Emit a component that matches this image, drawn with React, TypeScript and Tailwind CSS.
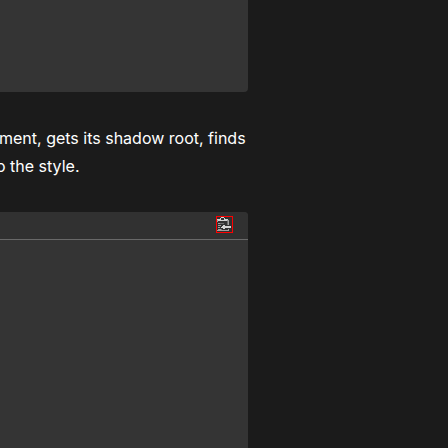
import React from "react";

function CopyIcon() {
  return (
    <svg viewBox="0 0 15 15" className="size-[15px]" shapeRendering="crispEdges" aria-hidden="true">
      <g fill="#d2d2d2">
        <path d="M4 0h3v1h-3zM3 1h1v1h-1zM7 1h1v1h-1zM0 2h4v1h-4zM7 2h4v1h-4zM1 3h9v1h-9z" />
        <path d="M4 10h1v1h-1zM5 9h9v2h-9zM6 8h2v4h-2z" />
      </g>
      <g fill="#a0a0a0">
        <path d="M0 3h1v2h-1zM10 3h2v1h-2zM11 3h1v5h-1zM0 14h11v-1h-11zM11 12h1v2h-1z" />
        <path d="M1 6h2v1h-2zM1 8h3v1h-3zM1 10h2v1h-2zM1 12h3v1h-3z" />
      </g>
      <path fill="#6b6b6b" d="M3 6h4v1h-4zM4 12h1v1h-1zM10 4h1v4h-1z" />
    </svg>
  );
}

export default function App() {
  return (
    <div className="min-h-screen overflow-hidden bg-[#1b1b1b] font-['Inter','Liberation_Sans',sans-serif] text-base leading-7 text-white">
      <main className="mr-[200px] flex h-screen flex-col">
        <div className="h-[92px] shrink-0 rounded-br bg-[#343434]" />
        <p className="my-8 whitespace-nowrap">
          <span className="-ml-px block">ment, gets its shadow root, finds</span>
          <span className="-ml-1 block">o the style.</span>
        </p>
        <section className="flex flex-1 flex-col overflow-hidden rounded-tr bg-[#343434]">
          <header className="flex h-7 shrink-0 items-start justify-end border-b border-[#696969] bg-[#313131] pt-1 pr-[15px]">
            <button type="button" aria-label="Copy to clipboard" className="size-[17px] border border-[#ff0000]">
              <CopyIcon />
            </button>
          </header>
        </section>
      </main>
    </div>
  );
}
